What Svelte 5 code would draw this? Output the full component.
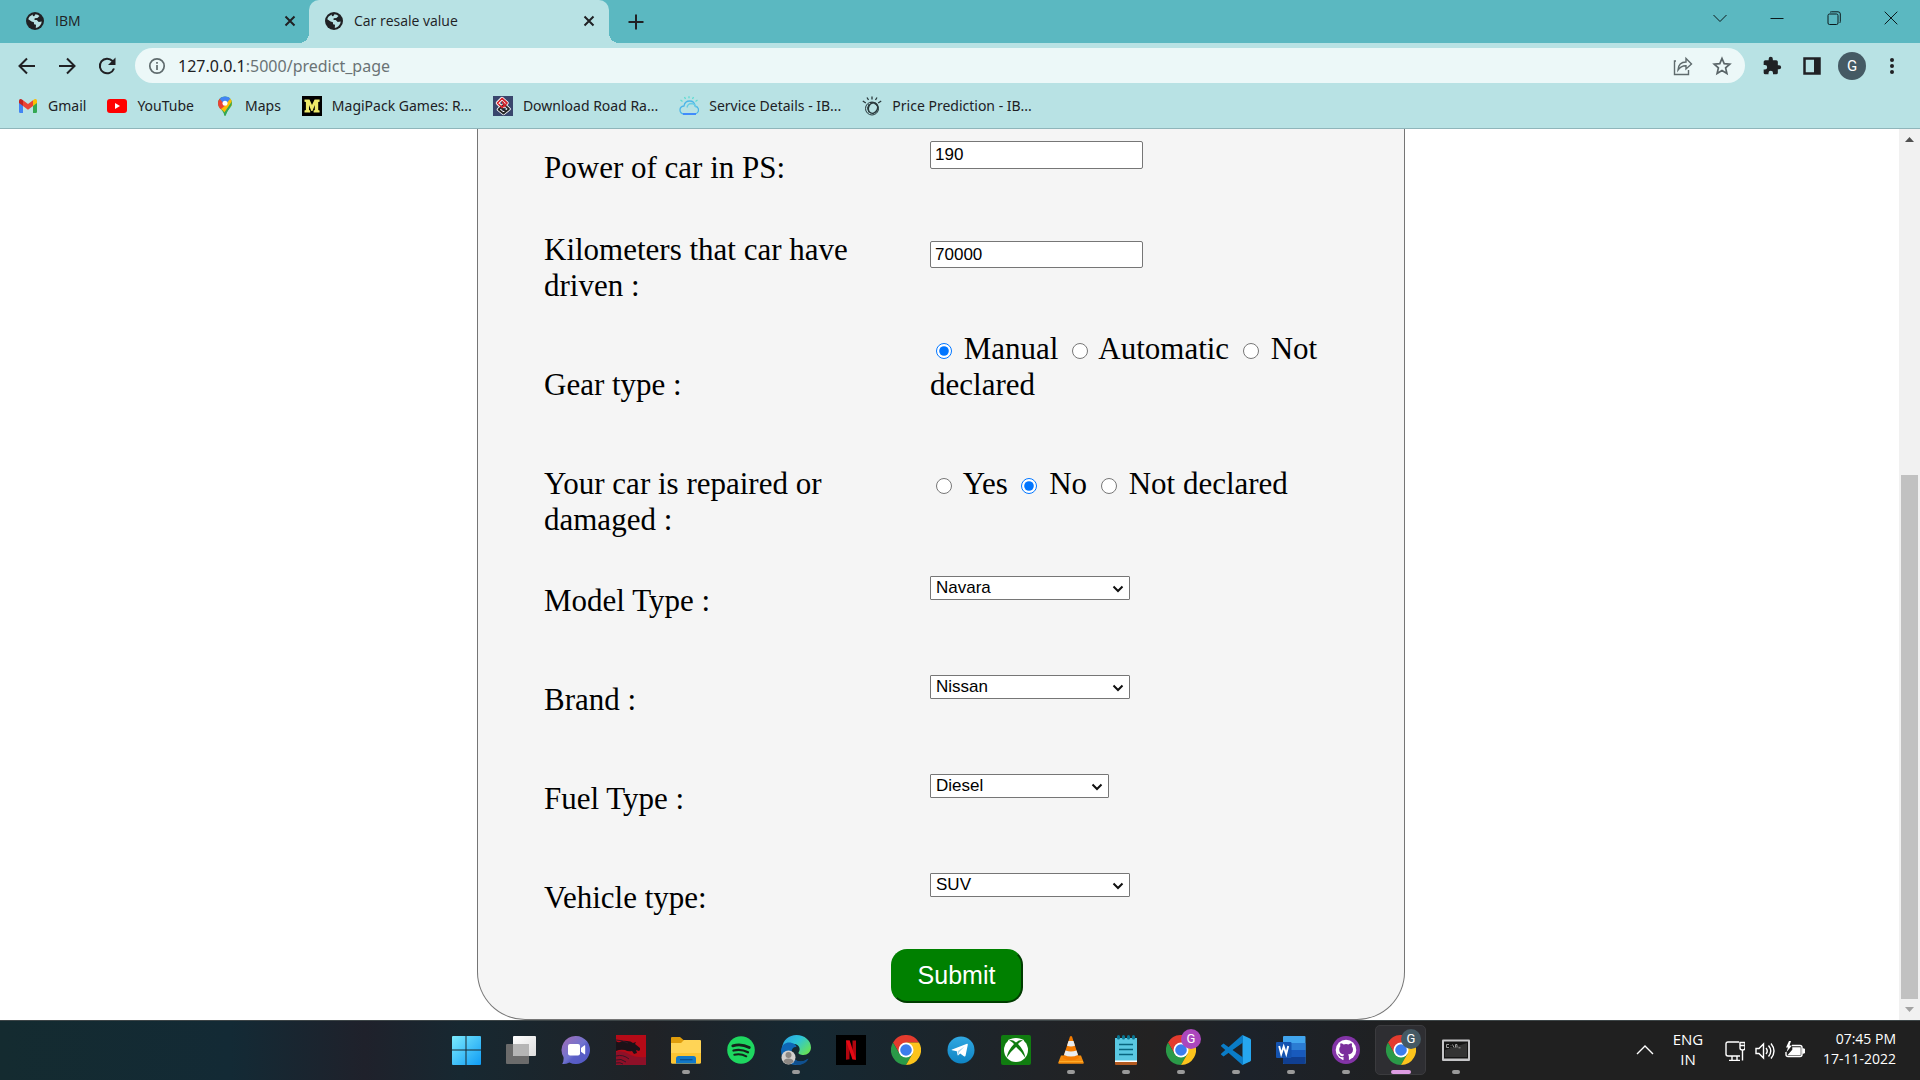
<script>
  let power = $state('190');
  let kilometers = $state('70000');
  let gear = $state('Manual');
  let repaired = $state('No');

  const gearOptions = ['Manual', 'Automatic', 'Not declared'];
  const repairedOptions = ['Yes', 'No', 'Not declared'];

  const selects = [
    { id: 'model', label: 'Model Type :', size: 'wide', options: ['Navara', 'Golf', 'Corolla'] },
    { id: 'brand', label: 'Brand :', size: 'wide', options: ['Nissan', 'Volkswagen', 'Toyota'] },
    { id: 'fuel', label: 'Fuel Type :', size: 'narrow', options: ['Diesel', 'Petrol', 'Electric'] },
    { id: 'vehicle', label: 'Vehicle type:', size: 'wide', options: ['SUV', 'Coupe', 'Limousine'] }
  ];

  const tabs = [
    { title: 'IBM', active: false },
    { title: 'Car resale value', active: true }
  ];

  const bookmarks = [
    { icon: 'gmail', title: 'Gmail' },
    { icon: 'youtube', title: 'YouTube' },
    { icon: 'maps', title: 'Maps' },
    { icon: 'magipack', title: 'MagiPack Games: R...' },
    { icon: 'road', title: 'Download Road Ra...' },
    { icon: 'cloud', title: 'Service Details - IB...' },
    { icon: 'watson', title: 'Price Prediction - IB...' }
  ];

  const apps = [
    { icon: 'windows', name: 'Start' },
    { icon: 'taskview', name: 'Task view' },
    { icon: 'chat', name: 'Chat' },
    { icon: 'dragon', name: 'Dragon Center' },
    { icon: 'explorer', name: 'File Explorer', running: true },
    { icon: 'spotify', name: 'Spotify' },
    { icon: 'edge', name: 'Edge', running: true },
    { icon: 'netflix', name: 'Netflix' },
    { icon: 'chrome', name: 'Chrome' },
    { icon: 'telegram', name: 'Telegram' },
    { icon: 'xbox', name: 'Xbox' },
    { icon: 'vlc', name: 'VLC', running: true },
    { icon: 'notepad', name: 'Notepad', running: true },
    { icon: 'chromePurple', name: 'Chrome, second profile', running: true },
    { icon: 'vscode', name: 'Visual Studio Code', running: true },
    { icon: 'word', name: 'Word', running: true },
    { icon: 'github', name: 'GitHub Desktop', running: true },
    { icon: 'chromeSlate', name: 'Chrome, first profile', running: true, active: true },
    { icon: 'terminal', name: 'Command Prompt', running: true }
  ];
</script>

{#snippet globe()}
  <svg class="i20" viewBox="0 0 20 20" aria-hidden="true">
    <circle cx="10" cy="10" r="9" fill="#202124" />
    <path d="M10.500 3.200c1.600.2 2.900.8 4 1.800L12.400 7l-2.700.3-.2 1.600 2.300.1 1.900 2 3-.5c-.2 2.600-1.900 4.900-4.300 5.900l-1.600.5.2-3.200-1.900-.5-.2-1.900-2.300-.8-3.300-2.300C3.500 6.400 5.300 4.300 8 3.400l-.3 1.500 1.500.3z" fill="#b8e2e4" />
    <path d="M3.200 9.500l3.500 1.800.4 2 1.500 1.100-.1 2.200C5.500 15.900 3.300 13 3.200 9.500z" fill="#202124" />
  </svg>
{/snippet}

{#snippet cross()}
  <svg class="i12" viewBox="0 0 12 12" fill="none" stroke="#202124" stroke-width="2" aria-hidden="true">
    <path d="M1.500 1.500l9 9M10.500 1.500l-9 9" />
  </svg>
{/snippet}

{#snippet chromeDisc()}
  <g transform="scale(.625)">
    <path d="M24 12H44.800A24 24 0 0 0 3.200 12L13.600 30z" fill="#e33b2e" />
    <path d="M13.600 30L3.200 12A24 24 0 0 0 24 48L34.400 30z" fill="#2a9a48" />
    <path d="M34.400 30L24 48A24 24 0 0 0 44.800 12H24z" fill="#fcc41c" />
    <circle cx="24" cy="24" r="12" fill="#fff" />
    <circle cx="24" cy="24" r="9.300" fill="#3b7ded" />
  </g>
{/snippet}

{#snippet bookmarkIcon(name)}
  <svg class="i20" viewBox="0 0 20 20" aria-hidden="true">
    {#if name === 'gmail'}
      <path d="M1 4.500L5 7v10H2.200Q1 17 1 15.800z" fill="#4285f4" />
      <path d="M15 7l4-2.500v11.300q0 1.200-1.200 1.200H15z" fill="#34a853" />
      <path d="M15 4.200l1.400-1Q19 2.200 19 5v2l-4 3z" fill="#fbbc04" />
      <path d="M1 7V5q0-2.800 2.600-1.800L5 4.200V10z" fill="#c5221f" />
      <path d="M5 4.200l5 3.900 5-3.900V10l-5 3.800L5 10z" fill="#ea4335" />
    {:else if name === 'youtube'}
      <rect y="3" width="20" height="14" rx="3" fill="#f00" />
      <path d="M8 7l5 3-5 3z" fill="#fff" />
    {:else if name === 'maps'}
      <path d="M10 .5c4 0 7 2.900 7 6.700 0 4.800-5.300 6-6.300 12.300h-1.400C8.600 13.800 3 12 3 7.200 3 3.400 6 .5 10 .5z" fill="#34a853" />
      <path d="M4.600 12L14.500 2C16 3.300 17 5 17 7.200c0 1.300-.4 2.400-1 3.400L9.400 16.500C8.300 14.200 6 13.500 4.600 12z" fill="#fbbc04" />
      <path d="M9.500 16.300L16.800 5.600c.9 5-4 6.700-6 13.900H9.300z" fill="#34a853" />
      <path d="M4.700 2.800L12 8 5.700 13.200C4 11.500 3 9.800 3 7.200c0-1.800.6-3.300 1.700-4.400z" fill="#ea4335" />
      <path d="M4.700 2.800C7.500-.4 12.900-.4 15.300 2.800L10 9z" fill="#4285f4" />
      <circle cx="10" cy="7.200" r="2.500" fill="#fff" />
    {:else if name === 'magipack'}
      <rect width="20" height="20" fill="#000" />
      <path d="M2.500 3.500h5L10 9l2.600-5.500h5v2.200l-1.400.3v8l1.400.4v2.200h-6v-2.200l1.200-.4V9L10.500 15h-1.200L7 9v5l1.200.4v2.200H2.500v-2.200l1.400-.4V6l-1.400-.3z" fill="#eeea6a" />
    {:else if name === 'road'}
      <rect width="20" height="20" fill="#39466d" />
      <g fill="none" stroke-linejoin="round">
        <path d="M9 2.500l5 4.500-5 4.500-4.500-4.500z" stroke="#fff" stroke-width="3.500" />
        <path d="M11 8.500l5 4.500-5.500 4.500L5.500 13.500z" stroke="#fff" stroke-width="3.500" />
        <path d="M11 8.500l5 4.500-5.500 4.500L5.500 13.500zM7.500 11l5 4" stroke="#252525" stroke-width="1.700" />
        <path d="M9 2.500l5 4.500-5 4.500-4.500-4.500zM9 5.500l4 5" stroke="#d5222b" stroke-width="1.700" />
      </g>
    {:else if name === 'cloud'}
      <g fill="none" stroke-width="1.300">
        <path d="M5 18q-4-.5-4-4t4-4q.8-5 5.700-5Q15.500 5 16 10q3.500.7 3.500 4T16 18z" stroke="#4cb5e8" />
        <path d="M4 18h13" stroke="#3a82ff" stroke-width="1.700" />
        <path d="M8 11.500q.8-4 4.500-4 4 .3 4.500 4" stroke="#69cce4" />
        <path d="M10 .2v2M5.500 1l1 2M14.500 1l-1 2M1.500 4l2 1.500M18.500 4l-2 1.500" stroke="#5ddbd2" />
      </g>
    {:else if name === 'watson'}
      <g fill="none" stroke="#28383b">
        <circle cx="10" cy="12.500" r="6.500" />
        <ellipse cx="11" cy="12" rx="4.500" ry="5.500" transform="rotate(25 11 12)" stroke-width="1.400" />
        <path d="M7 8q-3 4 0 8.500M8 6.500q8 .5 8 7" />
        <path d="M10 .5v3M5 1.500L6.500 4M15 1.500L13.500 4M.8 5l3 2M19.200 5l-3 2" stroke-width="1.300" />
      </g>
    {/if}
  </svg>
{/snippet}

{#snippet appIcon(name)}
  <svg class="i30" viewBox="0 0 30 30" aria-hidden="true">
    {#if name === 'windows'}
      <defs>
        <linearGradient id="win" x1="0" y1="0" x2="1" y2="1" gradientUnits="objectBoundingBox">
          <stop offset="0" stop-color="#7beafc" /><stop offset="1" stop-color="#0f9cf5" />
        </linearGradient>
      </defs>
      <path d="M1 2Q1 1 2 1H14.500V14.500H1zM15.500 1H29Q30 1 30 2V14.500H15.500zM1 15.500H14.500V30H2Q1 30 1 29zM15.500 15.500H30V29Q30 30 29 30H15.500z" fill="url(#win)" />
    {:else if name === 'taskview'}
      <defs>
        <linearGradient id="tv" x1="0" y1="0" x2="1" y2="1"><stop offset="0" stop-color="#fff" /><stop offset="1" stop-color="#dcdcdc" /></linearGradient>
      </defs>
      <rect y="9" width="23" height="20" rx="1" fill="#6b6b6b" />
      <rect x="7" y="1" width="23" height="20" rx="1" fill="url(#tv)" />
      <path d="M7 9H23V21H8Q7 21 7 20z" fill="#b5b5b5" />
    {:else if name === 'chat'}
      <defs>
        <linearGradient id="chat" x1="0" y1="0" x2="1" y2="1"><stop offset="0" stop-color="#a46cb4" /><stop offset=".5" stop-color="#7073cf" /><stop offset=".6" stop-color="#5b5fc7" /><stop offset="1" stop-color="#5058c4" /></linearGradient>
      </defs>
      <path d="M15 1A14 14 0 1 1 8.500 27.400Q4 29.500 1.200 28.800 3 26.500 2.500 22A14 14 0 0 1 15 1z" fill="url(#chat)" />
      <rect x="7" y="9" width="12" height="11.500" rx="2" fill="#fff" />
      <path d="M20 13l3.500-2.800q.7-.2.700.6v8q0 .8-.7.500L20 16.800z" fill="#fff" />
    {:else if name === 'dragon'}
      <rect width="30" height="30" fill="#b50a17" />
      <path d="M0 17q6-2 13 2 7 4 17 3v8H0z" fill="#8e1028" />
      <path d="M0 14V6q2 2 4 1 3-2 7-1 4 0 6 2l3-1-1 2 5 4v2l-1 1-3-1 1 3-3 1-2-3q-4 1-7-1-5-1-9 1z" fill="#1b1218" />
      <path d="M0 5q6 0 12 3M0 21q7-2 13 3M0 25q5-2 10 2M0 28q4-1 7 1" stroke="#351625" fill="none" />
    {:else if name === 'explorer'}
      <path d="M0 3Q0 2 1 2H9L12.500 5H29V10H0z" fill="#e09d0c" />
      <path d="M0 8H10L13 5H29Q30 5 30 6V27Q30 28.500 28.500 28.500H1.500Q0 28.500 0 27z" fill="#ffd456" />
      <path d="M0 18H30V27Q30 28.500 28.500 28.500H1.500Q0 28.500 0 27z" fill="#fcc534" />
      <path d="M5 28.500V23.500Q5 21 7.500 21H22.500Q25 21 25 23.500V28.500z" fill="#1178c8" />
      <path d="M9 24.700H21.500" stroke="#084f8f" stroke-width="1.200" />
    {:else if name === 'spotify'}
      <circle cx="15" cy="15" r="13.800" fill="#1ed760" />
      <g fill="none" stroke="#15231b" stroke-linecap="round">
        <path d="M6.800 10.800q8.500-2.600 16.500 1.800" stroke-width="2.800" /><path d="M7.500 15.500q7.500-2 14.500 1.800" stroke-width="2.300" /><path d="M8.300 19.800q6.300-1.500 12 1.500" stroke-width="2" />
      </g>
    {:else if name === 'edge'}
      <defs>
        <linearGradient id="ed" x1="0" y1="0" x2="1" y2=".7"><stop offset="0" stop-color="#2a9ee6" /><stop offset=".5" stop-color="#2dc4d8" /><stop offset="1" stop-color="#65e15a" /></linearGradient>
      </defs>
      <path d="M1 13C2 5 8 0 15.500 0 23.500 0 30 5.500 30 12.500c0 4.500-3.500 7.500-7.500 7.500-3.200 0-5.500-1.200-5-2.500 2.500-3 .8-7.500-3.500-8.500Q6 7.500 1 13z" fill="url(#ed)" />
      <path d="M0 15C1 8.500 6.500 6.500 11 8q4 1 4.500 4-4.500-.5-5 5C10.500 23 15 27 20 26.500q4-.3 7.500-3Q23 30 15 30 0 29 0 15z" fill="#0e67b7" />
      <path d="M10.500 15q-1 6 3.500 9.500 5 4 13.500-.5Q24 30 16 30q-7-2-8-9-.5-4 2.500-6z" fill="#10508f" />
      <circle cx="7.500" cy="22.500" r="7" fill="#d3d0ce" /><circle cx="7.500" cy="20" r="3" fill="#8c8783" /><path d="M2.500 27q0-3.500 5-3.500t5 3.500q-5 4.500-10 0z" fill="#8c8783" />
    {:else if name === 'netflix'}
      <rect width="30" height="30" fill="#000" />
      <path d="M10 5.500h3.500V24.300l-3.500.5zM16.500 5.500H20V24.800l-3.500-.5z" fill="#b1060f" />
      <path d="M10 5.500h3.700L20 24.800l-3.600-.5z" fill="#e50914" />
    {:else if name === 'chrome' || name === 'chromePurple' || name === 'chromeSlate'}
      {@render chromeDisc()}
    {:else if name === 'telegram'}
      <defs><linearGradient id="tg" x2="0" y2="1"><stop stop-color="#31a8e2" /><stop offset="1" stop-color="#0e84c4" /></linearGradient></defs>
      <circle cx="15" cy="15" r="13.500" fill="url(#tg)" />
      <path d="M5.500 14.700L21 8.700q1-.2.800 1L19.600 20.500q-.4 1.500-1.700.7l-3.700-2.700-1.900 1.800q-.6.500-.8-.5l-.7-3.500-4.800-1.100z" fill="#fff" />
      <path d="M11.600 16.300L18.500 11.400 13.300 17l-1.200 2.900z" fill="#a9d5ee" />
    {:else if name === 'xbox'}
      <rect width="30" height="30" rx="2" fill="#107c10" />
      <circle cx="15" cy="15" r="12" fill="#fff" />
      <path d="M7 5.500Q11 4 15 7.500 19 4 23 5.500q-2.500-.5-6 3.500 6 6 7.500 14Q20 16 15 12 10 16 5.500 23 7 15 13 9 9.500 5 7 5.500z" fill="#107c10" />
      <path d="M7 5.500q4-2.500 8-.5 4-2 8 .5" fill="none" stroke="#fff" />
    {:else if name === 'vlc'}
      <path d="M5 20.500H25L27.700 27.500Q28 28.700 26.800 28.700H3.200Q2 28.700 2.300 27.500z" fill="#f48b0c" />
      <path d="M14 1.500Q15 .5 16 1.500L23 23q-8 4.500-16 0z" fill="#f57c00" />
      <path d="M12.500 6h5l1.500 4.800q-4 1.500-8 0zM9.500 15.500q5.500 2 11 0l1.500 4.500q-7 3-14 0z" fill="#e9edf0" />
      <path d="M3 26.500H27" stroke="#ffab28" />
    {:else if name === 'notepad'}
      <rect x="4" y="24" width="22" height="6" rx="1" fill="#b35a20" />
      <path d="M4 3H26V27H4z" fill="#fff" /><path d="M4 3H26V25.500H4z" fill="#5ac8e2" />
      <path d="M8 9.500H22M8 14.500H22M8 19.500H22" stroke="#08657f" stroke-width="1.700" />
      <path d="M7.500 1.500v1.500M12.500 1.500v1.500M17.500 1.500v1.500M22.500 1.500v1.500" stroke="#0b7692" stroke-width="3" stroke-linecap="round" />
    {:else if name === 'vscode'}
      <path d="M21.500 0L29 3.500Q30 4 30 5V25Q30 26 29 26.500L21.500 30z" fill="#26a6ef" />
      <path d="M0 10.500L2.500 8.500 22 22.500V30q-.7 0-1.200-.6L.3 11.500Q0 11 0 10.500z" fill="#0a7cc7" />
      <path d="M0 19.500L2.500 21.500 22 7.500V0q-.7 0-1.200.6L.3 18.500Q0 19 0 19.500z" fill="#0a7cc7" />
    {:else if name === 'word'}
      <rect x="7" y="1" width="22.500" height="28" rx="1" fill="#41a5ee" /><rect x="7" y="8" width="22.500" height="7" fill="#2b7cd3" /><rect x="7" y="15" width="22.500" height="7" fill="#185abd" /><path d="M7 22H29.500V28Q29.500 29 28.500 29H8Q7 29 7 28z" fill="#103f91" />
      <rect y="7" width="15.500" height="16" rx="1" fill="#1453b0" />
      <path d="M3.200 11l2 8 2.500-7.500L10.200 19l2-8" fill="none" stroke="#fff" stroke-width="1.900" />
    {:else if name === 'github'}
      <circle cx="15" cy="15" r="14" fill="#8334a7" />
      <circle cx="15" cy="15" r="10.300" fill="#fff" />
      <path d="M12.500 26v-4q-3.500.7-4.500-1.500-.5-1-1.500-1.700 1.500-.3 2.500 1.200 1.200 1.700 3.400 1 .1-1 .8-1.600-5-.6-5-5 0-2 1.200-3.200-.5-1.500.1-3 1.500 0 3.200 1.200 2.300-.7 4.800 0 1.700-1.200 3.200-1.200.6 1.500.1 3Q22 12.400 22 14.400q0 4.400-5 5 .9.800.9 2.300V26z" fill="#7b2f9c" />
    {:else if name === 'terminal'}
      <rect x="1" y="4.500" width="28" height="21.500" rx="1" fill="#c6c6c8" /><rect x="3" y="6.500" width="24" height="17" fill="#151515" /><path d="M4 15L26 8v14H4z" fill="#333" />
      <path d="M8 9.500H5.500v3H8M10 10v.5M10 12v.5M11.500 9.500l1.500 3M14.500 12.500V9.500H16v3M17.500 12.800h2" fill="none" stroke="#999" />
    {/if}
  </svg>
{/snippet}

<div class="screen">
  <header class="tabstrip">
    <div class="tabs">
      {#each tabs as tab}
        <div class="tab" class:active={tab.active}>
          {@render globe()}
          <span class="tab-title">{tab.title}</span>
          <button class="plain" aria-label="Close tab">{@render cross()}</button>
        </div>
      {/each}
      <button class="plain new-tab" aria-label="New tab">
        <svg class="i16" viewBox="0 0 16 16" stroke="#202124" stroke-width="2"><path d="M8 .5v15M.5 8h15" /></svg>
      </button>
    </div>
    <div class="window-controls">
      <button class="plain" aria-label="Search tabs"><svg class="i14" viewBox="0 0 14 14"><path d="M.5 4L7 10.500 13.500 4" /></svg></button>
      <button class="plain" aria-label="Minimize"><svg class="i14" viewBox="0 0 14 14"><path d="M.5 7.500h13" /></svg></button>
      <button class="plain" aria-label="Restore"><svg class="i14" viewBox="0 0 14 14"><rect x="1" y="3" width="10" height="10.500" rx="1.500" /><path d="M3 1.500Q3.500 .8 4.500.8H11Q13.300.8 13.300 3v7.500q0 1-.8 1.500" /></svg></button>
      <button class="plain" aria-label="Close"><svg class="i14" viewBox="0 0 14 14"><path d="M.7.700l12.600 12.600M13.300.700L.7 13.300" /></svg></button>
    </div>
  </header>

  <div class="toolbar">
    <nav class="history">
      <button class="plain" aria-label="Back"><svg class="i20" viewBox="0 0 20 20"><path d="M18 10H3M10 2.500L2.500 10l7.500 7.500" /></svg></button>
      <button class="plain" aria-label="Forward"><svg class="i20" viewBox="0 0 20 20"><path d="M2 10h15M10 2.500l7.500 7.500-7.500 7.500" /></svg></button>
      <button class="plain" aria-label="Reload"><svg class="i20" viewBox="0 0 20 20"><path d="M17 12.500A7.300 7.300 0 1 1 15.500 5l1.500 1.500" /><path d="M18.500 1.500V9H11z" fill="#202124" stroke="none" /></svg></button>
    </nav>
    <div class="omnibox">
      <svg class="i18" viewBox="0 0 18 18" fill="none" stroke="#5f6b6d" stroke-width="1.700" aria-hidden="true"><circle cx="9" cy="9" r="7.200" /><path d="M9 8v5M9 5v1.700" /></svg>
      <div class="url"><span class="host">127.0.0.1</span>:5000/predict_page</div>
      <button class="plain" aria-label="Share"><svg class="i20" viewBox="0 0 20 20" fill="none" stroke="#5f6b6d" stroke-width="1.400"><path d="M3 5H1.500V18.500H15.500V14" /><path d="M5 14Q5.500 6 13 6V2.500L18.500 8 13 13V9.700Q8 9.500 5 14z" /></svg></button>
      <button class="plain star" aria-label="Bookmark this page"><svg class="i20" viewBox="0 0 20 20" fill="none" stroke="#5a6568" stroke-width="1.700"><path d="M10 2.500l2.200 5.200 5.600.5-4.200 3.700 1.300 5.500L10 14.500 5.100 17.400l1.300-5.500L2.200 8.200l5.600-.5z" /></svg></button>
    </div>
    <div class="actions">
      <button class="plain" aria-label="Extensions"><svg class="i20" viewBox="0 0 24 24"><path d="M20.500 11H19V7q0-2-2-2h-4V3.500a2.500 2.500 0 0 0-5 0V5H4Q2 5 2 7v3.800h1.500a2.700 2.700 0 0 1 0 5.400H2V20q0 2 2 2h3.800v-1.500a2.700 2.700 0 0 1 5.400 0V22H17q2 0 2-2v-4h1.500a2.500 2.500 0 0 0 0-5z" fill="#202124" /></svg></button>
      <button class="plain" aria-label="Side panel"><svg class="i20" viewBox="0 0 20 20"><path d="M2.500 2.500h15v15h-15z" fill="none" stroke="#202124" stroke-width="2.500" /><path d="M12 2h6v16h-6z" fill="#202124" /></svg></button>
      <button class="plain avatar" aria-label="Profile">G</button>
      <button class="plain" aria-label="Menu"><svg class="i20" viewBox="0 0 20 20" fill="#202124"><circle cx="10" cy="4" r="2" /><circle cx="10" cy="10" r="2" /><circle cx="10" cy="16" r="2" /></svg></button>
    </div>
  </div>

  <nav class="bookmarks">
    {#each bookmarks as b}
      <a href="#{b.icon}">{@render bookmarkIcon(b.icon)}<span>{b.title}</span></a>
    {/each}
  </nav>

  <div class="viewport">
    <main class="page">
      <form class="card" onsubmit={(e) => e.preventDefault()}>
        <div class="row first">
          <label for="power">Power of car in PS:</label>
          <input id="power" class="field" type="text" bind:value={power} />
        </div>
        <div class="row">
          <label for="km">Kilometers that car have driven :</label>
          <input id="km" class="field second" type="text" bind:value={kilometers} />
        </div>
        <div class="row gear" role="radiogroup" aria-labelledby="gear-label">
          <span id="gear-label" class="low">Gear type :</span>
          <div class="radios">
            {#each gearOptions as option, i}<input type="radio" id="gear{i}" name="gear" value={option} bind:group={gear} />{' '}<label for="gear{i}">{option}</label>{' '}{/each}
          </div>
        </div>
        <div class="row repaired" role="radiogroup" aria-labelledby="repaired-label">
          <span id="repaired-label">Your car is repaired or damaged :</span>
          <div class="radios">
            {#each repairedOptions as option, i}<input type="radio" id="rep{i}" name="repaired" value={option} bind:group={repaired} />{' '}<label for="rep{i}">{option}</label>{' '}{/each}
          </div>
        </div>
        {#each selects as s}
          <div class="row choice">
            <label for={s.id}>{s.label}</label>
            <div class="dropdown {s.size}">
              <select id={s.id}>
                {#each s.options as option}<option>{option}</option>{/each}
              </select>
              <svg class="caret" viewBox="0 0 12 8" aria-hidden="true"><path d="M1.500 1.500L6 6l4.500-4.500" /></svg>
            </div>
          </div>
        {/each}
        <button class="submit" type="submit">Submit</button>
      </form>
    </main>
    <div class="scrollbar" aria-hidden="true">
      <svg viewBox="0 0 21 21"><path d="M6 13h9l-4.500-5z" fill="#505050" /></svg>
      <div class="track"><div class="thumb"></div></div>
      <svg viewBox="0 0 21 21"><path d="M6 8h9l-4.500 5z" fill="#a3a3a3" /></svg>
    </div>
  </div>

  <footer class="taskbar">
    <div class="apps">
      {#each apps as app}
        <button class="app" class:active={app.active} aria-label={app.name}>
          {@render appIcon(app.icon)}
          {#if app.icon === 'chromePurple'}<span class="badge purple">G</span>{/if}
          {#if app.icon === 'chromeSlate'}<span class="badge slate">G</span>{/if}
          {#if app.running}<span class="dot"></span>{/if}
        </button>
      {/each}
    </div>
    <div class="tray">
      <svg class="i18" viewBox="0 0 18 18" aria-hidden="true"><path d="M1 12l8-8 8 8" /></svg>
      <div class="lang"><span>ENG</span><span>IN</span></div>
      <div class="status">
        <svg class="i20" viewBox="0 0 20 20" aria-hidden="true"><path d="M14 1H3Q1 1 1 3v10q0 2 2 2h12M4 19.500h11M7 15v4M12 15v4M17.500 9v10.500" /><path d="M15 1.500h5V7q0 2-2.500 2T15 7zM15 4.500h5" /></svg>
        <svg class="i20" viewBox="0 0 20 20" aria-hidden="true"><path d="M1 7.500h3L8.500 3v14L4 12.500H1zM11 7q2.500 3 0 6M13.500 4.500q4.500 5.500 0 11M16 2.500q6 7.500 0 15" /></svg>
        <svg class="i20" viewBox="0 0 20 20" aria-hidden="true"><path d="M7 4.500h8q2 0 2 2v7q0 2-2 2H3q-2 0-2-2V11" /><path d="M8 7h7v6.500H4L8 9z" fill="#fff" /><path d="M18 8q2 0 2 2t-2 2z" fill="#fff" /><path d="M4 0L1 6.500h2L1.500 11 7 4.500H4.500L6 0z" fill="#fff" stroke="none" /></svg>
      </div>
      <div class="clock"><span>07:45 PM</span><span>17-11-2022</span></div>
    </div>
  </footer>
</div>

<style>
  :global(body) { margin: 0; }
  * { box-sizing: border-box; }
  svg { display: block; flex: none; }
  .i12 { width: 12px; height: 12px; }
  .i14 { width: 14px; height: 14px; }
  .i16 { width: 16px; height: 16px; }
  .i18 { width: 18px; height: 18px; }
  .i20 { width: 20px; height: 20px; }
  .i30 { width: 30px; height: 30px; }

  .screen {
    display: flex;
    flex-direction: column;
    min-height: 100vh;
    background: #fff;
    font-family: "Open Sans", "Noto Sans", sans-serif;
    font-size: 14px;
    color: #202124;
  }
  .plain {
    display: flex;
    align-items: center;
    justify-content: center;
    padding: 0;
    border: 0;
    background: none;
    font: inherit;
    color: inherit;
  }

  .tabstrip { display: flex; justify-content: space-between; height: 43px; background: #5bb8c1; }
  .tabs { display: flex; }
  .tab { position: relative; display: flex; align-items: center; gap: 10px; width: 300px; padding: 0 14px 2px 15px; }
  .tab:first-child { width: 309px; padding-left: 25px; padding-right: 13px; }
  .tab .tab-title { flex: 1; }
  .tab.active { background: #b8e2e4; border-radius: 10px 10px 0 0; }
  .tab.active::before, .tab.active::after {
    content: "";
    position: absolute;
    bottom: 0;
    width: 10px;
    height: 10px;
  }
  .tab.active::before { right: 100%; background: radial-gradient(circle at 0 0, transparent 10px, #b8e2e4 10px); }
  .tab.active::after { left: 100%; background: radial-gradient(circle at 100% 0, transparent 10px, #b8e2e4 10px); }
  .new-tab { width: 54px; }
  .window-controls { display: flex; height: 36px; padding-right: 1px; }
  .window-controls .plain { width: 57px; }
  .window-controls svg { fill: none; stroke: #0c1a1c; }

  .toolbar { display: flex; align-items: center; height: 44px; padding: 1px 8px 0 7px; background: #b8e2e4; }
  .history { display: flex; width: 128px; }
  .history .plain { width: 40px; }
  .history svg { fill: none; stroke: #202124; stroke-width: 2; }
  .omnibox { display: flex; flex: 1; align-items: center; height: 35px; padding: 0 13px; border-radius: 18px; background: #ecf8f8; }
  .url { flex: 1; padding-left: 12px; font-family: "Noto Sans", sans-serif; font-size: 16px; color: #6a7375; }
  .host { color: #202124; }
  .star { margin-left: 19px; }
  .actions { display: flex; margin-left: 7px; }
  .actions .plain { width: 40px; }
  .actions .plain.avatar { width: 28px; height: 28px; margin: 0 6px; border-radius: 50%; background: #455a64; color: #fff; font-family: Roboto, sans-serif; font-size: 15px; }
  .actions .plain:not(.avatar) { height: 28px; }

  .bookmarks { display: flex; align-items: center; gap: 21px; height: 42px; padding: 0 18px 4px; border-bottom: 1px solid #8fb5ba; background: #b8e2e4; font-family: "Noto Sans", sans-serif; }
  .bookmarks a { display: flex; align-items: center; gap: 10px; color: #202124; text-decoration: none; white-space: nowrap; }

  .viewport { display: flex; flex: 1; }
  .page { display: grid; flex: 1; grid-template-columns: 477fr 928fr 494fr; }
  .card {
    grid-column: 2;
    display: flex;
    flex-direction: column;
    padding: 0 65px 16px 66px;
    border: 1px solid #757575;
    border-top: 0;
    border-radius: 0 0 48px 48px;
    background: #f5f5f5;
    color: #000;
    font-family: "Liberation Serif", serif;
    font-size: 31px;
    line-height: 36px;
  }
  .row { display: grid; grid-template-columns: 387fr 410fr; align-items: start; min-height: 99px; padding-top: 13px; }
  .row > label, .row > span { max-width: 320px; }
  .row.first { min-height: 90px; padding-top: 12px; }
  .row.first > label { padding-top: 9px; }
  .row.gear { min-height: 136px; }
  .row.gear .low { padding-top: 36px; }
  .row.repaired { min-height: 116px; padding-top: 12px; }
  .row.choice { padding-top: 6px; }
  .row.choice > label { padding-top: 7px; }
  .row.choice:nth-last-child(2) { min-height: 82px; }
  .field { width: 213px; height: 28px; padding: 0 4px; border: 1px solid #767676; border-radius: 2px; background: #fff; color: #000; font: 17px "Liberation Sans", sans-serif; }
  .field.second { height: 27px; margin-top: 9px; }
  .radios input { width: 16px; height: 16px; margin: 4px 4px 0 6px; }
  .dropdown { position: relative; display: flex; height: 24px; }
  .wide { width: 200px; }
  .narrow { width: 179px; }
  select { appearance: none; width: 100%; height: 24px; border: 1px solid #767676; border-radius: 1px; padding: 0 5px 1px; background: #fff; color: #000; font: 17px/20px "Liberation Sans", sans-serif; }
  .caret { position: absolute; top: 9px; right: 6px; width: 12px; height: 8px; fill: none; stroke: #101010; stroke-width: 2; pointer-events: none; }
  .submit {
    align-self: center;
    margin-left: 30px;
    width: 132px;
    height: 54px;
    padding: 0 0 2px;
    border: 2px solid;
    border-color: #008000 #003c00 #003c00 #008000;
    border-radius: 16px;
    background: #008000;
    color: #fff;
    font: 25px "Liberation Sans", sans-serif;
  }

  .scrollbar { display: flex; flex-direction: column; width: 21px; background: #f1f1f1; }
  .track { display: flex; flex: 1; flex-direction: column; padding: 0 2px; }
  .track::before { content: ""; flex: 325; }
  .thumb { flex: 525; background: #c1c1c1; }

  .taskbar {
    display: grid;
    grid-template-columns: 1fr auto 1fr;
    height: 60px;
    border-top: 1px solid #3d4547;
    background: linear-gradient(90deg, #142b30 0%, #132a35 12%, #1f212b 19%, #172831 24%, #202226 34%, #152832 42%, #202327 54%, #232222 60%, #1c222a 65%, #202020 74%, #202020 100%);
    color: #fff;
  }
  .apps { display: flex; grid-column: 2; align-items: center; padding: 0 0 1px 1px; }
  .app {
    position: relative;
    display: flex;
    align-items: center;
    justify-content: center;
    width: 51px;
    height: 50px;
    margin: 0 2px;
    padding: 0;
    border: 1px solid transparent;
    border-radius: 5px;
    background: none;
  }
  .app.active { border-color: #3b3b3e; background: #2e2e32; }
  .dot { position: absolute; bottom: 0; left: 50%; width: 8px; height: 4px; margin-left: -4px; border-radius: 2px; background: #9a9a9a; }
  .active .dot { width: 20px; margin-left: -10px; background: #dd9ce2; }
  .badge { position: absolute; top: 3px; right: 4px; width: 20px; height: 20px; border-radius: 50%; color: #fff; font: 13px/20px Roboto, sans-serif; text-align: center; }
  .purple { background: #ab47bc; }
  .slate { background: #455a64; }
  .tray { display: flex; align-items: center; justify-content: flex-end; padding-right: 24px; font-size: 14px; line-height: 20px; }
  .tray svg { fill: none; stroke: #fff; stroke-width: 1.4; }
  .tray div { display: flex; }
  .tray .lang { flex-direction: column; align-items: center; width: 30px; margin: 0 22px 0 19px; padding-bottom: 3px; font-size: 15px; }
  .tray .status { gap: 10px; }
  .tray .clock { flex-direction: column; align-items: flex-end; width: 91px; padding-bottom: 3px; }
</style>
